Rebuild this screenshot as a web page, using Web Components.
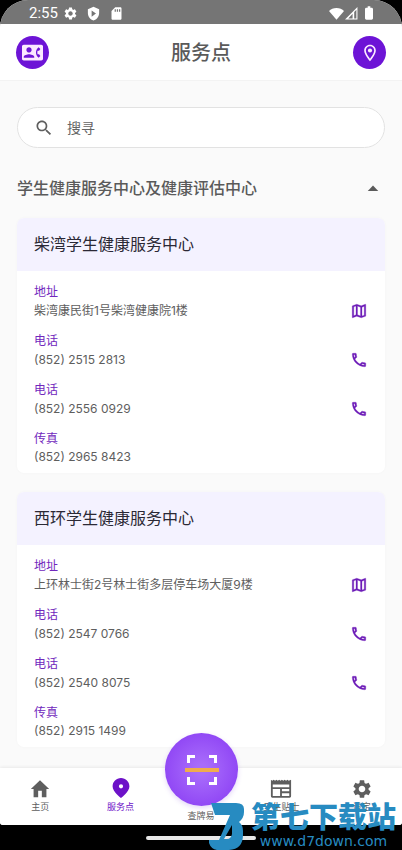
<!DOCTYPE html>
<html lang="zh-CN">
<head>
<meta charset="utf-8">
<meta name="viewport" content="width=device-width, initial-scale=1">
<title>服务点</title>
<style>
html, body { margin: 0; background: #000; }
body { font-family: Inter, "Noto Sans CJK SC", sans-serif; color: #606060; }
</style>
</head>
<body>
<service-app></service-app>
<script>
const ICONS = {
  contact: '<path d="M22 3H2C.9 3 0 3.9 0 5v14c0 1.1.9 2 2 2h20c1.1 0 1.99-.9 1.99-2L24 5c0-1.1-.9-2-2-2zM8 6c1.66 0 3 1.34 3 3s-1.34 3-3 3-3-1.34-3-3 1.34-3 3-3zm6 12H2v-1c0-2 4-3.1 6-3.1s6 1.1 6 3.1v1zm3.85-4h1.64L21 16l-1.99 1.99c-1.31-.98-2.28-2.38-2.73-3.99-.18-.64-.28-1.31-.28-2s.1-1.36.28-2c.45-1.62 1.42-3.01 2.73-3.99L21 8l-1.51 2h-1.64c-.22.63-.35 1.3-.35 2s.13 1.37.35 2z"/>',
  place: '<path d="M12 2C8.13 2 5 5.13 5 9c0 5.25 7 13 7 13s7-7.75 7-13c0-3.87-3.13-7-7-7zM7 9c0-2.76 2.24-5 5-5s5 2.24 5 5c0 2.88-2.88 7.19-5 9.88C9.92 16.21 7 11.85 7 9z"/><circle cx="12" cy="9" r="2.5"/>',
  pin: '<path fill-rule="evenodd" d="M12 2c-4.7 0-8.4 3.7-8.4 8.4C3.6 15.8 12 22 12 22s8.4-6.2 8.4-11.6C20.4 5.7 16.7 2 12 2zm0 6.2a2.1 2.1 0 1 1 0 4.2 2.1 2.1 0 0 1 0-4.2z"/>',
  map: '<path stroke="currentColor" stroke-width=".4" d="M20.5 3l-.16.03L15 5.1 9 3 3.36 4.9c-.21.07-.36.25-.36.48V20.5c0 .28.22.5.5.5l.16-.03L9 18.9l6 2.1 5.64-1.9c.21-.07.36-.25.36-.48V3.5c0-.28-.22-.5-.5-.5zM10 5.47l4 1.4v11.66l-4-1.4V5.47zm-5 .99l3-1.01v11.7l-3 1.16V6.46zm14 11.08l-3 1.01V6.86l3-1.16v11.84z"/>',
  call: '<path stroke="currentColor" stroke-width=".4" d="M6.54 5c.06.89.21 1.76.45 2.59l-1.2 1.2c-.41-1.2-.67-2.47-.76-3.79h1.51m9.86 12.02c.85.24 1.72.39 2.6.45v1.49c-1.32-.09-2.59-.35-3.8-.75l1.2-1.19M7.5 3H4c-.55 0-1 .45-1 1 0 9.39 7.61 17 17 17 .55 0 1-.45 1-1v-3.49c0-.55-.45-1-1-1-1.24 0-2.45-.2-3.57-.57-.1-.04-.21-.05-.31-.05-.26 0-.51.1-.71.29l-2.2 2.2c-2.83-1.45-5.15-3.76-6.59-6.59l2.2-2.2c.28-.28.36-.67.25-1.02C8.7 6.45 8.5 5.25 8.5 4c0-.55-.45-1-1-1z"/>',
  search: '<path d="M15.5 14h-.79l-.28-.27C15.41 12.59 16 11.11 16 9.5 16 5.91 13.09 3 9.5 3S3 5.91 3 9.5 5.91 16 9.5 16c1.61 0 3.09-.59 4.23-1.57l.27.28v.79l5 4.99L20.49 19l-4.99-5zm-6 0C7.01 14 5 11.99 5 9.5S7.01 5 9.5 5 14 7.01 14 9.5 11.99 14 9.5 14z"/>',
  up: '<path d="M5 16l7-7.5 7 7.5z"/>',
  home: '<path d="M10 21v-7h4v7h5v-9h3L12 2.5 2 12h3v9z"/>',
  news: '<path fill-rule="evenodd" d="M1 2l1.5 1L4 2l1.5 1L7 2l1.5 1L10 2l1.5 1L13 2l1.5 1L16 2l1.5 1L19 2l1.5 1L23 2v18c0 1-.7 1.5-1.5 1.5h-19C1.7 21.5 1 21 1 20zm2 5v3h18V7zm0 5v7.5h8V12zm10 0v2.5h8V12zm0 4.5v3h8v-3z"/>',
  gear: '<path d="M19.14 12.94c.04-.3.06-.61.06-.94 0-.32-.02-.64-.07-.94l2.03-1.58c.18-.14.23-.41.12-.61l-1.92-3.32c-.12-.22-.37-.29-.59-.22l-2.39.96c-.5-.38-1.03-.7-1.62-.94l-.36-2.54c-.04-.24-.24-.41-.48-.41h-3.84c-.24 0-.43.17-.47.41l-.36 2.54c-.59.24-1.13.57-1.62.94l-2.39-.96c-.22-.08-.47 0-.59.22L2.74 8.87c-.12.21-.08.47.12.61l2.03 1.58c-.05.3-.09.63-.09.94s.02.64.07.94l-2.03 1.58c-.18.14-.23.41-.12.61l1.92 3.32c.12.22.37.29.59.22l2.39-.96c.5.38 1.03.7 1.62.94l.36 2.54c.05.24.24.41.48.41h3.84c.24 0 .44-.17.47-.41l.36-2.54c.59-.24 1.13-.56 1.62-.94l2.39.96c.22.08.47 0 .59-.22l1.92-3.32c.12-.22.07-.47-.12-.61l-2.01-1.58zM12 15.6c-1.98 0-3.6-1.62-3.6-3.6s1.62-3.6 3.6-3.6 3.6 1.62 3.6 3.6-1.62 3.6-3.6 3.6z"/>',
  shield: '<path fill-rule="evenodd" d="M12 1L3 5v6c0 5.55 3.84 10.74 9 12 5.16-1.26 9-6.45 9-12V5zM9 7l7 5-7 5z"/>',
  sd: '<path fill-rule="evenodd" d="M18 2h-8L4 8v12c0 1.1.9 2 2 2h12c1.1 0 2-.9 2-2V4c0-1.1-.9-2-2-2zM9 5h2v4H9zm3.5 0h2v4h-2zM16 5h2v4h-2z"/>',
  wifi: '<path d="M12 22L0 8C3 5 7 3 12 3s9 2 12 5z"/>',
  signal: '<path fill-rule="evenodd" d="M0 23L23 0v23zM14 12.5L6 21h8zM17 9v12h4V5z"/>',
  battery: '<path d="M16 4h-2V2h-4v2H8c-1 0-2 1-2 2v14c0 1 1 2 2 2h8c1 0 2-1 2-2V6c0-1-1-2-2-2z"/>',
  scan: '<g fill="none" stroke="#fff" stroke-width="3"><path d="M3.5 9V2.5H10M24 2.5h6.5V9M30.5 23v6.5H24M10 29.5H3.5V23"/></g><path d="M0 14h34v4H0z" fill="#efac4c"/>',
  brand: '<path fill="#278bc1" fill-rule="evenodd" d="M2 1h25q8 0 8 6v3q0 6-5 10 4 3 4 9v4q0 14-14 15H8q-6-1-8-7v-3h10L21 13H6zM23 23l-8 14h3q4 0 5-5z"/>'
};

class UiIcon extends HTMLElement {
  constructor() { super(); this.attachShadow({ mode: 'open' }); }
  connectedCallback() {
    this.shadowRoot.innerHTML = `<style>
      :host { display: block; flex: none; width: var(--size, 18px); height: var(--size, 18px); }
      svg { display: block; width: 100%; height: 100%; }
    </style><svg viewBox="${this.getAttribute('box') || '0 0 24 24'}" fill="currentColor" aria-hidden="true">${ICONS[this.getAttribute('name')]}</svg>`;
  }
}
customElements.define('ui-icon', UiIcon);

function define(name, markup) {
  const template = document.createElement('template');
  template.innerHTML = markup;
  customElements.define(name, class extends HTMLElement {
    constructor() {
      super();
      this.attachShadow({ mode: 'open' }).append(template.content.cloneNode(true));
    }
  });
}

define('status-bar', `<style>
  :host { display: flex; justify-content: space-between; align-items: center; height: 24px; padding: 2px 25px 0 29px; box-sizing: border-box; background: #757575; color: #fff; font: 15px/22px Roboto, sans-serif; }
  div { display: flex; align-items: center; gap: 8px; --size: 15px; }
  .left span { margin-right: -3px; }
  .right { gap: 1px; }
</style>
<div class="left"><span>2:55</span><ui-icon name="gear"></ui-icon><ui-icon name="shield"></ui-icon><ui-icon name="sd"></ui-icon></div>
<div class="right"><ui-icon name="wifi"></ui-icon><ui-icon name="signal" style="--size:13px"></ui-icon><ui-icon name="battery" style="--size:16px; margin-left:2px"></ui-icon></div>`);

define('app-header', `<style>
  :host { display: flex; justify-content: space-between; align-items: center; height: 57px; padding: 1px 16px 0; box-sizing: border-box; background: #fff; border-bottom: 1px solid #f3f3f3; }
  h1 { margin: 0; font-size: 20px; line-height: 28px; font-weight: 500; color: #5a5a5a; }
  button { display: grid; place-items: center; width: 33px; height: 33px; padding: 0; border: 0; border-radius: 50%; background: #6d14d6; color: #fbe9ff; }
</style>
<button aria-label="联系"><ui-icon name="contact" style="--size:21px"></ui-icon></button>
<h1><slot></slot></h1>
<button aria-label="地图"><ui-icon name="place" style="--size:20px"></ui-icon></button>`);

define('search-box', `<style>
  :host { display: block; }
  label { display: flex; align-items: center; gap: 13px; height: 41px; padding: 0 16px; box-sizing: border-box; border: 1px solid #e2e2e2; border-radius: 21px; background: #fff; color: #5f5f5f; --size: 20px; }
  input { flex: 1; min-width: 0; border: 0; padding: 0; outline: 0; background: none; font: inherit; font-size: 14px; line-height: 20px; color: #606060; }
  input::placeholder { color: #666; opacity: 1; }
</style>
<label><ui-icon name="search"></ui-icon><input type="search" placeholder="搜寻" aria-label="搜寻"></label>`);

define('section-toggle', `<style>
  :host { display: block; }
  h2 { margin: 0; font: inherit; }
  button { display: flex; justify-content: space-between; align-items: center; width: 100%; padding: 0 3px 0 0; border: 0; background: none; color: #5a5a5a; font: inherit; font-size: 16px; line-height: 24px; font-weight: 500; text-align: left; }
</style>
<h2><button aria-expanded="true"><span><slot></slot></span><ui-icon name="up"></ui-icon></button></h2>`);

define('service-card', `<style>
  :host { display: block; border-radius: 7px; overflow: hidden; background: #fff; box-shadow: 0 0 3px #00000008; }
  h3 { margin: 0; padding: 14px 17px; font-size: 16px; line-height: 25px; font-weight: 400; color: #2b2935; background: #f4f2ff; }
  .rows { display: flex; flex-direction: column; gap: 11px; padding: 12px 17px 7px; }
</style>
<h3><slot name="title"></slot></h3><div class="rows"><slot></slot></div>`);

class ContactRow extends HTMLElement {
  constructor() { super(); this.attachShadow({ mode: 'open' }); }
  connectedCallback() {
    const icon = this.getAttribute('icon');
    const label = this.getAttribute('label');
    this.shadowRoot.innerHTML = `<style>
      :host { display: block; font-size: 12px; line-height: 18px; }
      .label { color: #7128bd; }
      .value { display: flex; justify-content: space-between; align-items: center; color: #5e5e5e; }
      .value.action { line-height: 20px; }
      button { display: block; padding: 0; border: 0; background: none; color: #6d1cb8; }
    </style><div class="label">${label}</div><div class="value${icon ? ' action' : ''}"><span><slot></slot></span>${icon ? `<button aria-label="${label}"><ui-icon name="${icon}"></ui-icon></button>` : ''}</div>`;
  }
}
customElements.define('contact-row', ContactRow);

define('nav-item', `<style>
  :host { display: block; flex: 1 1 0; min-width: 0; }
  a { display: flex; flex-direction: column; align-items: center; padding-top: 10px; color: #5e5e5e; text-decoration: none; font-size: 9px; line-height: 14px; --size: 22px; }
  :host([active]) a { color: #6d12c8; --size: 24px; padding-top: 8px; }
  :host([plain]) a { padding-top: 41px; }
</style>
<a href="#"><slot name="icon"></slot><span><slot></slot></span></a>`);

define('bottom-nav', `<style>
  :host { display: block; position: relative; background: #fff; box-shadow: 0 -1px 3px #00000012; }
  nav { display: flex; height: 57px; }
  .scan { position: absolute; left: 50%; top: -35px; margin-left: -36px; width: 73px; height: 73px; display: grid; place-items: center; padding: 0; border: 0; border-radius: 50%; background: radial-gradient(circle, #a86cfb 10%, #8637f2 100%); box-shadow: 0 2px 5px #7a3ad833; --size: 34px; }
</style>
<nav>
  <nav-item><ui-icon slot="icon" name="home"></ui-icon>主页</nav-item>
  <nav-item active><ui-icon slot="icon" name="pin"></ui-icon>服务点</nav-item>
  <nav-item plain>查牌易</nav-item>
  <nav-item><ui-icon slot="icon" name="news"></ui-icon>卫生贴士</nav-item>
  <nav-item><ui-icon slot="icon" name="gear"></ui-icon>设定</nav-item>
</nav>
<button class="scan" aria-label="扫描"><ui-icon name="scan" box="0 0 34 32"></ui-icon></button>`);

define('gesture-bar', `<style>
  :host { display: flex; justify-content: center; align-items: center; height: 25px; background: #000; }
  span { width: 110px; height: 4px; border-radius: 2px; background: #e8e8e8; }
</style><span></span>`);

define('site-mark', `<style>
  :host { position: absolute; right: 6px; bottom: 0; display: flex; align-items: center; gap: 6px; color: #278bc1; --size: 48px; pointer-events: none; }
  ui-icon { width: 36px; }
  strong { display: block; font-size: 29px; line-height: 31px; font-weight: 900; }
  small { display: block; font: 14px/17px "DejaVu Sans", sans-serif; text-align: center; }
</style>
<ui-icon name="brand" box="0 0 36 48"></ui-icon><div><strong>第七下载站</strong><small>www.d7down.com</small></div>`);

define('service-app', `<style>
  :host { display: flex; flex-direction: column; height: 100vh; position: relative; overflow: hidden; }
  .screen { flex: 1; min-height: 0; display: flex; flex-direction: column; border-radius: 28px 28px 3px 3px; overflow: hidden; background: #fafafa; }
  main { flex: 1; min-height: 0; overflow: hidden; padding: 26px 17px 0; }
  section-toggle { margin: 28px 0 18px; }
  service-card + service-card { margin-top: 19px; }
</style>
<div class="screen">
  <status-bar></status-bar>
  <app-header>服务点</app-header>
  <main>
    <search-box></search-box>
    <section-toggle>学生健康服务中心及健康评估中心</section-toggle>
    <service-card><span slot="title">柴湾学生健康服务中心</span>
      <contact-row label="地址" icon="map">柴湾康民街1号柴湾健康院1楼</contact-row>
      <contact-row label="电话" icon="call">(852) 2515 2813</contact-row>
      <contact-row label="电话" icon="call">(852) 2556 0929</contact-row>
      <contact-row label="传真">(852) 2965 8423</contact-row>
    </service-card>
    <service-card><span slot="title">西环学生健康服务中心</span>
      <contact-row label="地址" icon="map">上环林士街2号林士街多层停车场大厦9楼</contact-row>
      <contact-row label="电话" icon="call">(852) 2547 0766</contact-row>
      <contact-row label="电话" icon="call">(852) 2540 8075</contact-row>
      <contact-row label="传真">(852) 2915 1499</contact-row>
    </service-card>
  </main>
  <bottom-nav></bottom-nav>
</div>
<gesture-bar></gesture-bar>
<site-mark></site-mark>`);
</script>
</body>
</html>
